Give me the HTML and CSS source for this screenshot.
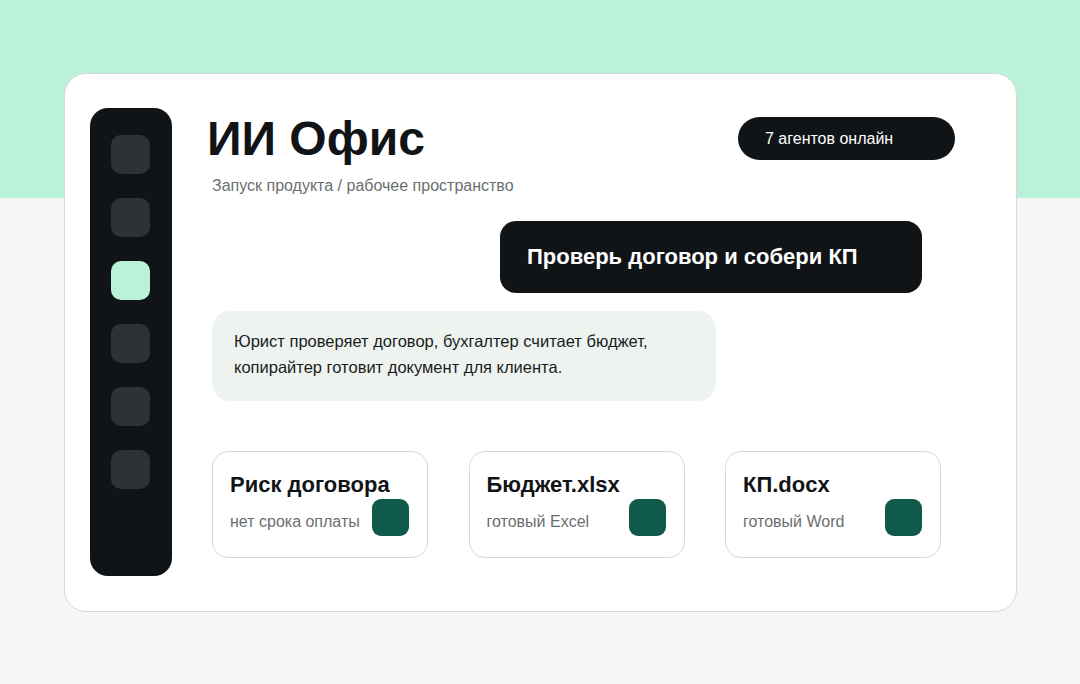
FILE: index.html
```html
<!DOCTYPE html>
<html lang="ru">
<head>
    <meta charset="UTF-8" />
    <meta name="viewport" content="width=device-width, initial-scale=1.0"/>
    <title>ИИ Офис</title>
    <link rel="stylesheet" href="styles.css">
</head>
<body>
    <div class="office-window">
        <nav class="side-rail">
            <div class="rail-item"></div>
            <div class="rail-item"></div>
            <div class="rail-item active"></div>
            <div class="rail-item"></div>
            <div class="rail-item"></div>
            <div class="rail-item"></div>
        </nav>

        <main class="workspace">
            <header class="workspace-header">
                <div>
                    <h1 class="workspace-title">ИИ Офис</h1>
                    <p class="workspace-path">Запуск продукта / рабочее пространство</p>
                </div>
                <div class="online-badge">7 агентов онлайн</div>
            </header>

            <div class="command-box">Проверь договор и собери КП</div>

            <div class="reply-bubble">
                Юрист проверяет договор, бухгалтер считает бюджет,<br>
                копирайтер готовит документ для клиента.
            </div>

            <section class="result-list">
                <div class="result-card">
                    <h3 class="result-title">Риск договора</h3>
                    <div class="result-row">
                        <span class="result-note">нет срока оплаты</span>
                        <span class="result-icon"></span>
                    </div>
                </div>
                <div class="result-card">
                    <h3 class="result-title">Бюджет.xlsx</h3>
                    <div class="result-row">
                        <span class="result-note">готовый Excel</span>
                        <span class="result-icon"></span>
                    </div>
                </div>
                <div class="result-card">
                    <h3 class="result-title">КП.docx</h3>
                    <div class="result-row">
                        <span class="result-note">готовый Word</span>
                        <span class="result-icon"></span>
                    </div>
                </div>
            </section>
        </main>
    </div>
</body>
</html>
```

FILE: styles.css
```css
* {
    margin: 0;
    padding: 0;
    box-sizing: border-box;
}

body {
    font-family: 'Liberation Sans', Arial, sans-serif;
    background: linear-gradient(to bottom, #b9f2d9 0, #b9f2d9 198px, #f5f7f4 198px);
    height: 684px;
    padding: 73px 64px 0;
    color: #111417;
}

.office-window {
    width: 953px;
    height: 539px;
    background: #fff;
    border: 1px solid #d6dad7;
    border-radius: 22px;
    padding: 34px 25px;
    display: flex;
    gap: 40px;
}

.side-rail {
    width: 82px;
    height: 468px;
    background: #111417;
    border-radius: 18px;
    padding: 27px 21px;
    display: flex;
    flex-direction: column;
    gap: 24px;
}

.rail-item {
    width: 39px;
    height: 39px;
    border-radius: 10px;
    background: #2d3236;
}

.rail-item.active {
    background: #b9f2d9;
}

.workspace {
    flex: 1;
    display: flex;
    flex-direction: column;
    padding-top: 7px;
    padding-right: 36px;
}

.workspace-header {
    display: flex;
    justify-content: space-between;
    align-items: flex-start;
}

.workspace-title {
    font-size: 48px;
    line-height: 48px;
    font-weight: 700;
    margin-left: -5px;
}

.workspace-path {
    margin-top: 13px;
    font-size: 16px;
    line-height: 20px;
    color: #6b6f70;
}

.online-badge {
    margin-top: 2px;
    width: 217px;
    height: 43px;
    padding: 0 27px;
    border-radius: 22px;
    background: #111417;
    color: #fff;
    font-size: 16px;
    display: flex;
    align-items: center;
}

.command-box {
    align-self: flex-end;
    margin-top: 25px;
    margin-right: 33px;
    width: 422px;
    height: 72px;
    padding: 0 27px;
    border-radius: 16px;
    background: #111417;
    color: #fff;
    font-size: 22px;
    font-weight: 700;
    display: flex;
    align-items: center;
}

.reply-bubble {
    margin-top: 18px;
    width: 504px;
    height: 90px;
    padding: 17px 22px 21px;
    border-radius: 18px;
    background: #eef3ef;
    font-size: 16.5px;
    line-height: 26px;
    color: #1a1d1f;
}

.result-list {
    margin-top: 50px;
    display: flex;
    gap: 40.5px;
}

.result-card {
    width: 216px;
    height: 107px;
    border: 1px solid #d6dad7;
    border-radius: 16px;
    padding: 21px 18px 0 17px;
}

.result-title {
    font-size: 22px;
    line-height: 24px;
    font-weight: 700;
}

.result-row {
    margin-top: 2px;
    display: flex;
    justify-content: space-between;
    align-items: flex-end;
}

.result-note {
    font-size: 16px;
    line-height: 20px;
    margin-bottom: 4px;
    color: #6b6f70;
}

.result-icon {
    width: 37px;
    height: 37px;
    border-radius: 9px;
    background: #0f5a4a;
}
```
